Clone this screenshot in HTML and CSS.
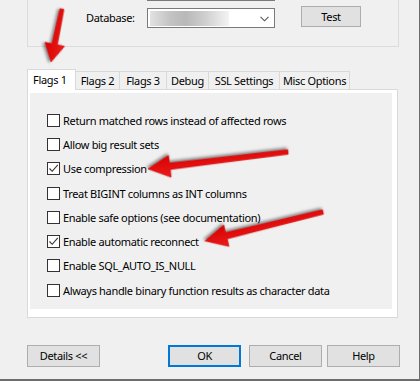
FILE: index.html
```html
<!DOCTYPE html>
<html>
<head>
<meta charset="utf-8">
<link rel="stylesheet" href="styles.css">
</head>
<body>
<div class="window">
  <div class="group">
    <div class="prev-combo"></div>
    <div class="db-row">
      <span class="db-label">Database:</span>
      <div class="combo">
        <div class="blur"></div>
        <svg class="chev" width="9" height="6" viewBox="0 0 9 6"><path d="M0.5 0.8 L4.5 4.8 L8.5 0.8" fill="none" stroke="#555" stroke-width="1.1"/></svg>
      </div>
      <button class="btn test">Test</button>
    </div>
  </div>

  <div class="tabs">
    <div class="tab active">Flags 1</div>
    <div class="tab w2">Flags 2</div>
    <div class="tab w3">Flags 3</div>
    <div class="tab w4">Debug</div>
    <div class="tab w5">SSL Settings</div>
    <div class="tab w6">Misc Options</div>
  </div>
  <div class="panel">
    <div class="page">
      <label class="row"><span class="cb"></span>Return matched rows instead of affected rows</label>
      <label class="row"><span class="cb"></span>Allow big result sets</label>
      <label class="row"><span class="cb checked"><svg width="11" height="11" viewBox="0 0 11 11"><path d="M1.5 5.5 L4.2 8.3 L9.8 1.8" fill="none" stroke="#333" stroke-width="1.1"/></svg></span>Use compression</label>
      <label class="row"><span class="cb"></span>Treat BIGINT columns as INT columns</label>
      <label class="row"><span class="cb"></span>Enable safe options (see documentation)</label>
      <label class="row"><span class="cb checked"><svg width="11" height="11" viewBox="0 0 11 11"><path d="M1.5 5.5 L4.2 8.3 L9.8 1.8" fill="none" stroke="#333" stroke-width="1.1"/></svg></span>Enable automatic reconnect</label>
      <label class="row"><span class="cb"></span>Enable SQL_AUTO_IS_NULL</label>
      <label class="row"><span class="cb"></span>Always handle binary function results as character data</label>
    </div>
  </div>

  <div class="buttons">
    <button class="btn details">Details &lt;&lt;</button>
    <button class="btn ok">OK</button>
    <button class="btn cancel">Cancel</button>
    <button class="btn help">Help</button>
  </div>

  <svg class="arrows" width="420" height="381" viewBox="0 0 420 381">
    <defs>
      <linearGradient id="rg" x1="0" y1="-1" x2="0" y2="1" gradientUnits="objectBoundingBox">
        <stop offset="0" stop-color="#ff3a3a"/>
        <stop offset="1" stop-color="#d80000"/>
      </linearGradient>
    </defs>
    <g class="arrow" transform="translate(62 9) rotate(101.7)">
      <path d="M0 -2 L36 -2.8 L36 -10 L54 0 L36 10 L36 2.8 L0 2 Z"/>
    </g>
    <g class="arrow" transform="translate(288 152) rotate(173.1)">
      <path d="M0 -2.2 L119 -3.2 L119 -11 L141 0 L119 11 L119 3.2 L0 2.2 Z"/>
    </g>
    <g class="arrow" transform="translate(323 212) rotate(166.2)">
      <path d="M0 -2.2 L99.5 -3.2 L99.5 -11 L121.5 0 L99.5 11 L99.5 3.2 L0 2.2 Z"/>
    </g>
  </svg>
</div>
</body>
</html>
```
FILE: styles.css
```css
* { box-sizing: border-box; }
html, body { margin: 0; padding: 0; }
body {
  background: #f0f0f0;
  font-family: "Noto Sans", "Open Sans", sans-serif;
  font-size: 11px;
  letter-spacing: -0.33px;
  color: #000;
  width: 420px;
  height: 381px;
  overflow: hidden;
}
.window {
  position: relative;
  width: 420px;
  height: 381px;
  padding-left: 27px;
  border-right: 1px solid #6d6d6d;
  border-bottom: 2px solid #6d6d6d;
}
.group {
  width: 372px;
  height: 47px;
  border: 1px solid #dcdcdc;
  border-top: none;
}
.prev-combo {
  margin-left: 119px;
  width: 128px;
  height: 1px;
  background: #7a7a7a;
}
.db-row {
  display: flex;
  align-items: flex-start;
  margin-top: 5px;
  height: 21px;
}
.db-label {
  margin-left: 58px;
  width: 61px;
  margin-top: 2px;
  line-height: 20px;
}
.combo {
  margin-top: 2px;
  width: 128px;
  height: 20px;
  border: 1px solid #7a7a7a;
  background: #fff;
  display: flex;
  align-items: center;
  padding-left: 2px;
}
.blur {
  width: 79px;
  height: 15px;
  background: linear-gradient(90deg, #e2e2e2 0%, #c4c4c4 25%, #b8b8b8 45%, #cfcfcf 70%, #f4f4f4 100%);
  filter: blur(0.6px);
}
.chev { margin-left: 31px; margin-top: 1px; }
.btn {
  font-family: inherit;
  font-size: 11px;
  letter-spacing: -0.33px;
  color: #000;
  background: #e1e1e1;
  border: 1px solid #adadad;
  padding: 0;
  margin: 0;
}
.test {
  margin-left: 26px;
  width: 60px;
  height: 21px;
  line-height: 17px;
}
.tabs {
  display: flex;
  align-items: flex-end;
  margin-top: 22px;
  height: 20px;
}
.tab {
  height: 18px;
  border-top: 1px solid #d9d9d9;
  border-right: 1px solid #d9d9d9;
  line-height: 17px;
  text-align: center;
  background: #f0f0f0;
  white-space: nowrap;
}
.tab.active {
  width: 49px;
  background: #fff;
  border-left: 1px solid #d9d9d9;
  line-height: 19px;
  text-align: left;
  padding-left: 5px;
  position: relative;
  z-index: 1;
  margin-bottom: -1px;
  height: 21px;
}
.w2 { width: 44px; }
.w3 { width: 47px; }
.w4 { width: 42px; }
.w5 { width: 71px; }
.w6 { width: 70px; }
.panel {
  width: 371px;
  height: 229px;
  border: 1px solid #d9d9d9;
  background: #fff;
  padding: 3px 5px 8px 2px;
}
.page {
  height: 100%;
  background: #f0f0f0;
  padding: 15px 0 0 17px;
}
.row {
  display: flex;
  align-items: center;
  height: 24.3px;
  white-space: nowrap;
}
.cb {
  width: 13px;
  height: 13px;
  border: 1px solid #333;
  background: #fff;
  margin-right: 3px;
  flex: none;
  display: flex;
  align-items: center;
  justify-content: center;
}
.buttons {
  display: flex;
  margin-top: 27px;
}
.buttons .btn {
  width: 73px;
  height: 22px;
  line-height: 18px;
}
.ok {
  margin-left: 68px;
  border: 2px solid #0078d7 !important;
}
.cancel { margin-left: 8px; }
.help { margin-left: 5px; }
.arrows {
  position: absolute;
  left: 0;
  top: 0;
  pointer-events: none;
}
.arrow {
  fill: url(#rg);
  stroke: #e00000;
  stroke-width: 0.6;
  stroke-linejoin: round;
  filter: drop-shadow(1.5px 2px 1.5px rgba(0, 0, 0, 0.45));
}
```
